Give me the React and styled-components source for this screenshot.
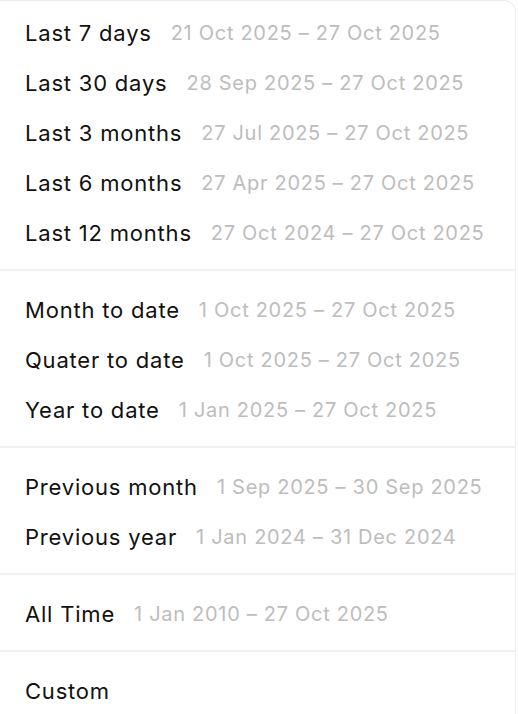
import React from 'react'
import styled, { createGlobalStyle } from 'styled-components'

const GlobalStyle = createGlobalStyle`
  html, body {
    margin: 0;
    padding: 0;
    background: #ffffff;
  }
  body {
    font-family: Inter, "Noto Sans", "Liberation Sans", sans-serif;
    -webkit-font-smoothing: antialiased;
  }
`

const Sheet = styled.div`
  width: 516px;
  box-sizing: border-box;
  background: #ffffff;
  border: 1px solid #ececec;
  border-left: none;
  border-bottom: none;
  border-top-right-radius: 12px;
  display: flex;
  flex-direction: column;
`

const Group = styled.div`
  display: flex;
  flex-direction: column;
  padding: ${p => (p.$first ? '7px' : '14px')} 0 11px;
  border-top: ${p => (p.$first ? 'none' : '2px solid #f2f2f2')};
`

const Option = styled.div`
  height: 50px;
  display: flex;
  align-items: center;
  gap: 19px;
  padding-left: 25px;
  cursor: pointer;
`

const Label = styled.span`
  font-size: 22px;
  color: #111111;
  letter-spacing: 0.8px;
`

const Range = styled.span`
  font-size: 20px;
  color: #bdbdbd;
  letter-spacing: 0.7px;
`

const groups = [
  [
    ['Last 7 days', '21 Oct 2025 – 27 Oct 2025'],
    ['Last 30 days', '28 Sep 2025 – 27 Oct 2025'],
    ['Last 3 months', '27 Jul 2025 – 27 Oct 2025'],
    ['Last 6 months', '27 Apr 2025 – 27 Oct 2025'],
    ['Last 12 months', '27 Oct 2024 – 27 Oct 2025'],
  ],
  [
    ['Month to date', '1 Oct 2025 – 27 Oct 2025'],
    ['Quater to date', '1 Oct 2025 – 27 Oct 2025'],
    ['Year to date', '1 Jan 2025 – 27 Oct 2025'],
  ],
  [
    ['Previous month', '1 Sep 2025 – 30 Sep 2025'],
    ['Previous year', '1 Jan 2024 – 31 Dec 2024'],
  ],
  [['All Time', '1 Jan 2010 – 27 Oct 2025']],
  [['Custom', null]],
]

export default function App() {
  return (
    <>
      <GlobalStyle />
      <Sheet>
        {groups.map((items, i) => (
          <Group key={i} $first={i === 0}>
            {items.map(([label, range]) => (
              <Option key={label}>
                <Label>{label}</Label>
                {range && <Range>{range}</Range>}
              </Option>
            ))}
          </Group>
        ))}
      </Sheet>
    </>
  )
}
